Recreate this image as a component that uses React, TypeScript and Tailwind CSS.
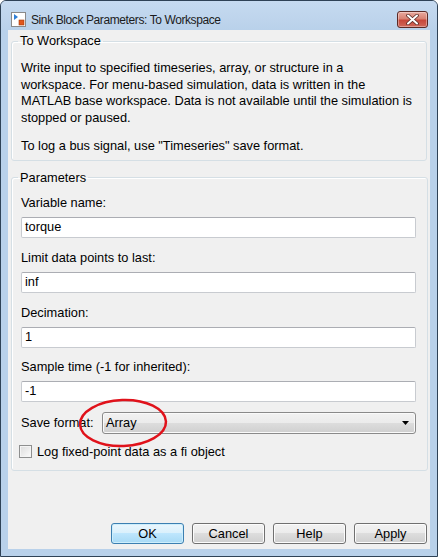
import React from "react";

// Simulink "To Workspace" block parameter dialog, Windows 7 look

const TitleIcon: React.FC = () => (
  <svg width="15" height="15" viewBox="0 0 15 15">
    <rect x="0.5" y="0.5" width="14" height="14" fill="#ffffff" stroke="#8a8a8a" />
    <path d="M3 2 L3 8 L7 5 Z" fill="#2f7fd6" />
    <rect x="8" y="8" width="5" height="5" fill="#e0561b" stroke="#a33a0c" strokeWidth="0.6" />
  </svg>
);

const CloseButton: React.FC = () => (
  <div className="flex h-[17px] w-[31px] items-center justify-center rounded-[3px] border border-[#5b2a26] bg-[linear-gradient(#e9a99f_0%,#d88273_45%,#c7473a_55%,#d0685a_100%)] shadow-[inset_0_0_0_1px_rgba(255,255,255,0.35)]">
    <svg width="13" height="11" viewBox="0 0 13 11">
      <path
        d="M2 1.5 L11 9.5 M11 1.5 L2 9.5"
        stroke="#5a2a26"
        strokeWidth="3.6"
        strokeLinecap="round"
      />
      <path
        d="M2 1.5 L11 9.5 M11 1.5 L2 9.5"
        stroke="#ffffff"
        strokeWidth="2"
        strokeLinecap="round"
      />
    </svg>
  </div>
);

const Field: React.FC<{ label: string; value: string; top: string }> = ({ label, value, top }) => (
  <>
    <div className={top + " h-[16px] leading-[16px]"}>{label}</div>
    <div className="mt-[6px] flex h-[21px] items-center rounded-[2px] border border-[#c8cbd0] border-t-[#abadb3] bg-white pl-[3px]">
      {value}
    </div>
  </>
);

const Button: React.FC<{ label: string; primary?: boolean }> = ({ label, primary }) => (
  <div
    className={
      primary
        ? "flex h-[21px] w-[73px] items-center justify-center rounded-[3px] border border-[#3c7fb1] bg-[linear-gradient(#eaf6fd_0%,#d9f0fc_50%,#bee6fd_50%,#a7d9f5_100%)] shadow-[inset_0_0_0_1px_#cdeefc]"
        : "flex h-[21px] w-[73px] items-center justify-center rounded-[3px] border border-[#707070] bg-[linear-gradient(#f2f2f2_0%,#ebebeb_50%,#dddddd_50%,#cfcfcf_100%)] shadow-[inset_0_0_0_1px_#fcfcfc]"
    }
  >
    {label}
  </div>
);

const App: React.FC = () => {
  return (
    <div className="relative h-[557px] w-[438px] bg-white font-['Liberation_Sans',Arial,sans-serif] text-[12.8px] text-black">
      <div className="flex h-full flex-col rounded-t-[6px] border border-[#2f4256] bg-[#b9d1ea]">
        {/* title bar */}
        <div className="flex h-[29px] shrink-0 items-start rounded-t-[5px] bg-[linear-gradient(#c6daf0,#b9d1ea)] pl-[10px] pr-[9px] pt-[10px]">
          <div className="mt-[1px]">
            <TitleIcon />
          </div>
          <div className="ml-[5px] text-[12px] leading-[18px] tracking-[-0.4px] text-[#1b1b1b]">
            Sink Block Parameters: To Workspace
          </div>
          <div className="ml-auto">
            <CloseButton />
          </div>
        </div>

        {/* client area */}
        <div className="mx-[7px] mb-[7px] flex flex-1 flex-col bg-[#f0f0f0]">
          <fieldset className="ml-[3px] mr-[3px] mt-[3px] rounded-[3px] border border-[#d5dfe5] pb-[5px] pl-[9px] pr-[9px] pt-[11px] shadow-[inset_1px_1px_0_#ffffff]">
            <legend className="-ml-[3px] px-[2px] text-[12.8px] leading-[16px]">To Workspace</legend>
            <div className="whitespace-nowrap leading-[16.5px]">
              Write input to specified timeseries, array, or structure in a
              <br />
              workspace. For menu-based simulation, data is written in the
              <br />
              MATLAB base workspace. Data is not available until the simulation is
              <br />
              stopped or paused.
            </div>
            <div className="mt-[12px] whitespace-nowrap leading-[16.5px]">
              To log a bus signal, use "Timeseries" save format.
            </div>
          </fieldset>

          <fieldset className="ml-[3px] mr-[2px] mt-[9px] rounded-[3px] border border-[#d5dfe5] pb-[10px] pl-[9px] pr-[11px] shadow-[inset_1px_1px_0_#ffffff]">
            <legend className="-ml-[3px] px-[2px] text-[12.8px] leading-[16px]">Parameters</legend>
            <Field label="Variable name:" value="torque" top="mt-[9px]" />
            <Field label="Limit data points to last:" value="inf" top="mt-[12px]" />
            <Field label="Decimation:" value="1" top="mt-[12px]" />
            <Field label="Sample time (-1 for inherited):" value="-1" top="mt-[11px]" />

            <div className="mt-[10px] flex items-center">
              <div className="w-[81px] shrink-0">Save format:</div>
              <div className="flex h-[22px] flex-1 items-center rounded-[3px] border border-[#8a8a8a] bg-[linear-gradient(#f2f2f2_0%,#ebebeb_50%,#dddddd_50%,#cfcfcf_100%)] pl-[3px] pr-[6px] shadow-[inset_0_0_0_1px_#fafafa]">
                <span>Array</span>
                <svg className="ml-auto" width="7" height="4" viewBox="0 0 7 4">
                  <path d="M0 0 L7 0 L3.5 4 Z" fill="#000000" />
                </svg>
              </div>
            </div>

            <div className="mt-[10px] flex h-[16px] items-center">
              <div className="-ml-[2px] h-[13px] w-[13px] border border-[#8e8f8f] bg-[linear-gradient(135deg,#dcdcdc,#fbfbfb)] shadow-[inset_0_0_0_1px_#f4f4f4]" />
              <span className="ml-[5px]">Log fixed-point data as a fi object</span>
            </div>
          </fieldset>

          <div className="mb-[5px] mr-[3px] mt-auto flex justify-end gap-[8px]">
            <Button label="OK" primary />
            <Button label="Cancel" />
            <Button label="Help" />
            <Button label="Apply" />
          </div>
        </div>
      </div>

      {/* red hand-drawn highlight around the save format */}
      <svg className="absolute left-[76px] top-[396px]" width="94" height="54" viewBox="0 0 94 54">
        <ellipse
          cx="47"
          cy="27"
          rx="43"
          ry="23"
          fill="none"
          stroke="#e0121b"
          strokeWidth="2.5"
          transform="rotate(-2 47 27)"
        />
      </svg>
    </div>
  );
};

export default App;
